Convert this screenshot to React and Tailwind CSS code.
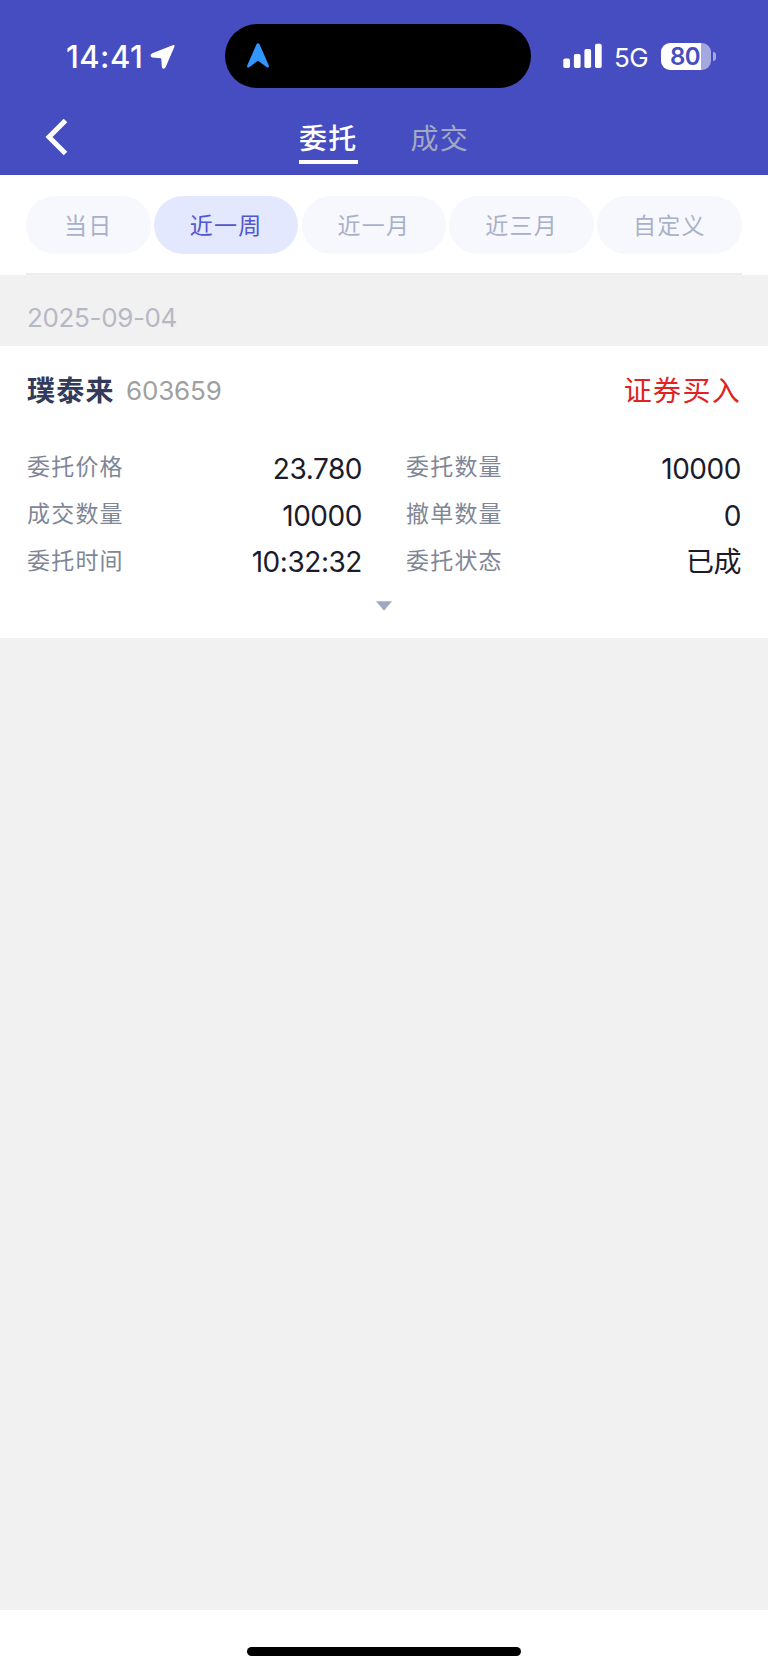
const filters = ['当日', '近一周', '近一月', '近三月', '自定义'];

const rows = [
  ['委托价格', '23.780', '委托数量', '10000'],
  ['成交数量', '10000', '撤单数量', '0'],
  ['委托时间', '10:32:32', '委托状态', '已成'],
];

function StatusBar() {
  return (
    <div className="flex h-16 items-center">
      <div className="flex w-[225px] items-center pl-[66px]">
        <span className="w-[84px] whitespace-nowrap pt-0.5 text-[31px] font-medium leading-[62px] tracking-[0.450px]">14:41</span>
        <svg className="mt-px h-[26px] w-[26px]" viewBox="0 0 26 26" fill="#fff">
          <path d="M22.700 1.300 2.300 9.300C-.2 10.300.2 13.300 2.600 13.600L10.600 14.200Q11.300 14.300 11.300 15L11.800 22.500C12 25.200 14.700 25.500 15.700 23L24.300 3.100C25 1.500 24.100.700 22.700 1.300Z" />
        </svg>
      </div>
      <div className="flex h-16 w-[306px] items-center rounded-full bg-black pl-[22px]">
        <svg className="mb-px h-[25px] w-[22px]" viewBox="0 0 22 25" fill="#3296ff">
          <path d="M9.500 1.300c.6-1.500 2.400-1.500 3 0L21.800 22.500c.5 1.300-.6 2.500-1.900 1.700L11.700 18.200q-.7-.4-1.400 0L2.100 24.200C.8 25-.3 23.800.200 22.500Z" />
        </svg>
      </div>
      <svg className="ml-8 h-[26px] w-[39px]" viewBox="0 0 39 26" fill="#fff">
        <rect x="0.300" y="15.500" width="6.700" height="9.500" rx="1.800" />
        <rect x="10.900" y="11" width="6.700" height="14" rx="1.800" />
        <rect x="21.400" y="6" width="6.700" height="19" rx="1.800" />
        <rect x="32" y="0.700" width="6.700" height="24.300" rx="1.800" />
      </svg>
      <span className="ml-3 w-[47px] pt-[3px] text-[26px] leading-[61px] tracking-[-0.6px]">5G</span>
      <div className="flex h-[27px] w-[50px] items-center overflow-hidden rounded-[9px] bg-[linear-gradient(90deg,#fff_80%,#a5a8e0_80%)] pl-[9px] text-[24px] font-semibold leading-[27px] tracking-[-0.6px] text-[#454dc0]">
        80
      </div>
      <div className="ml-0.5 h-[9px] w-[3px] rounded-r-full bg-[#a5a8e0]" />
    </div>
  );
}

function NavBar() {
  return (
    <div className="flex h-[87px] whitespace-nowrap text-[28px] tracking-[1.3px]">
      <button className="flex w-[298px] pl-[45px] pt-[30px]" aria-label="返回">
        <svg className="h-[38px] w-6" viewBox="0 0 24 38" fill="none" stroke="#fff" strokeWidth="5">
          <path d="M20.500 2.500 4 19l16.500 16.500" />
        </svg>
      </button>
      <div className="flex w-[60px] flex-col pt-[30px]">
        <span className="h-[42px] pl-px font-medium leading-[42px]">委托</span>
        <span className="mx-[0.500px] h-1 bg-white" />
      </div>
      <span className="ml-[52.500px] pt-[30px] leading-[42px] text-[#a3a8c4]">成交</span>
    </div>
  );
}

export default function App() {
  return (
    <div className="flex h-[1670px] w-[768px] flex-col bg-[#f1f1f1] font-['Inter','Noto_Sans_CJK_SC',sans-serif]">
      <header className="h-[175px] bg-[#454dc0] pt-6 text-white">
        <StatusBar />
        <NavBar />
      </header>

      <div className="h-[100px] bg-white px-[26px] pt-[21px]">
        <div className="box-content flex h-[77px] gap-[3.300px] border-b-2 border-[#eeeeee]">
          {filters.map((label, i) => (
            <button
              key={label}
              className={
                'h-[57.500px] rounded-full pt-0.5 text-[23px] tracking-[1.250px] ' +
                (i === 0 ? 'w-[124.500px] ' : 'w-[144.500px] ') +
                (i === 1 ? 'bg-[#e4e8ff] text-[#5157cc]' : 'bg-[#f7f8fd] text-[#a9b1c9]')
              }
            >
              {label}
            </button>
          ))}
        </div>
      </div>

      <div className="h-[71px] pl-[27px] text-[26px] leading-[85px] tracking-[-0.350px] text-[#b7b8c5]">2025-09-04</div>

      <main className="h-[292px] bg-white px-[27px]">
        <div className="flex h-[97px] pt-6 leading-[42px]">
          <span className="text-[28px] font-bold tracking-[1.300px] text-[#343a59]">璞泰来</span>
          <span className="ml-[11px] text-[26px] tracking-[-0.150px] text-[#a0a0a0]">603659</span>
          <span className="ml-auto text-[28px] tracking-[1.300px] text-[#e02222]">证券买入</span>
        </div>
        {rows.map((row) => (
          <div key={row[0]} className="flex h-[46.700px] items-center">
            <span className="w-[130px] pt-0.5 text-[23px] leading-[46px] tracking-[1.200px] text-[#7f8797]">{row[0]}</span>
            <span className="w-[205px] pt-[5px] text-right text-[28px] leading-[46px] tracking-[-0.450px] text-[#1b1b2b]">{row[1]}</span>
            <span className="ml-[44px] w-[130px] pt-0.5 text-[23px] leading-[46px] tracking-[1.200px] text-[#7f8797]">{row[2]}</span>
            <span className="flex-1 pt-[5px] text-right text-[28px] leading-[46px] tracking-[-0.450px] text-[#1b1b2b]">{row[3]}</span>
          </div>
        ))}
        <svg className="mx-auto mt-[18px] h-[10px] w-4" viewBox="0 0 16 10" fill="#a0a9c0">
          <path d="M0 .3h16L8 9.800Z" />
        </svg>
      </main>

      <footer className="mt-auto h-[60px] bg-white pt-[36.500px]">
        <div className="ml-[247px] h-[9px] w-[274px] rounded-full bg-black" />
      </footer>
    </div>
  );
}
